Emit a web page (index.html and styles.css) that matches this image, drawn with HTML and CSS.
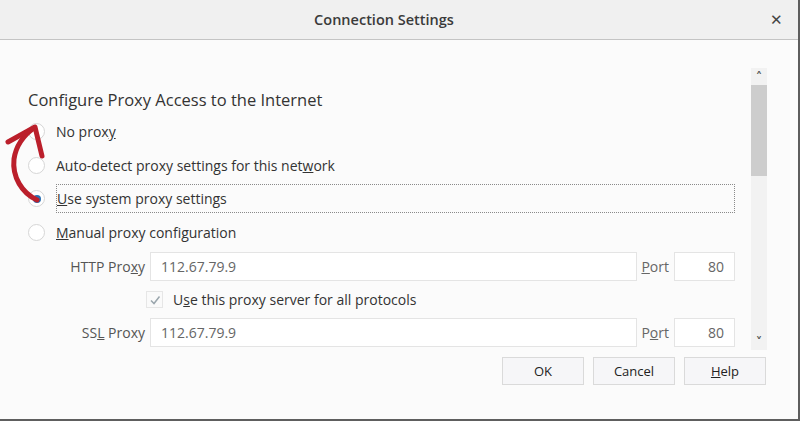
FILE: index.html
```html
<!DOCTYPE html>
<html>
<head>
<meta charset="utf-8">
<link rel="stylesheet" href="styles.css">
</head>
<body>
<div class="dialog">
  <div class="titlebar">
    <span class="title">Connection Settings</span>
    <span class="close">✕</span>
  </div>
  <div class="main">
    <div class="pane">
      <h1 class="heading">Configure Proxy Access to the Internet</h1>
      <div class="radio-row first"><span class="radio"></span><span class="label">No prox<u>y</u></span></div>
      <div class="radio-row"><span class="radio"></span><span class="label">Auto-detect proxy settings for this net<u>w</u>ork</span></div>
      <div class="radio-row focus"><span class="radio checked"></span><span class="label"><u>U</u>se system proxy settings</span></div>
      <div class="radio-row"><span class="radio"></span><span class="label"><u>M</u>anual proxy configuration</span></div>
      <div class="field-row">
        <span class="flabel">HTTP Pro<u>x</u>y</span>
        <span class="input">112.67.79.9</span>
        <span class="plabel"><u>P</u>ort</span>
        <span class="input port">80</span>
      </div>
      <div class="check-row">
        <span class="checkbox"><svg width="12" height="12" viewBox="0 0 12 12"><path d="M2 6.5 L5 9.5 L10.5 2.5" fill="none" stroke="#9aa6ad" stroke-width="1.5"/></svg></span>
        <span class="label">U<u>s</u>e this proxy server for all protocols</span>
      </div>
      <div class="field-row">
        <span class="flabel">SS<u>L</u> Proxy</span>
        <span class="input">112.67.79.9</span>
        <span class="plabel">P<u>o</u>rt</span>
        <span class="input port">80</span>
      </div>
    </div>
    <div class="scrollbar">
      <span class="arrow">&#x2C4;</span>
      <span class="thumb"></span>
      <span class="track"></span>
      <span class="arrow">&#x2C5;</span>
    </div>
  </div>
  <div class="buttons">
    <button class="btn">OK</button>
    <button class="btn">Cancel</button>
    <button class="btn"><u>H</u>elp</button>
  </div>
  <svg class="annotation" width="60" height="100" viewBox="0 115 60 100">
    <path d="M37 200 C 22 193, 12 177, 14 159 C 16 146, 24 135, 34 128" fill="none" stroke="#bb1f2b" stroke-width="5" stroke-linecap="round"/>
    <path d="M8 142 L35 127 L42 156" fill="none" stroke="#bb1f2b" stroke-width="5" stroke-linecap="round" stroke-linejoin="round"/>
  </svg>
</div>
</body>
</html>
```
FILE: styles.css
```css
html, body {
  margin: 0;
  padding: 0;
}
body {
  font-family: "Open Sans", "Noto Sans", sans-serif;
  color: #333;
  background: #fbfbfb;
}
.dialog {
  position: relative;
  width: 800px;
  height: 421px;
  box-sizing: border-box;
  border-right: 2px solid #5e5e5e;
  border-bottom: 2px solid #5e5e5e;
  background: #fbfbfb;
  overflow: hidden;
}
.titlebar {
  height: 40px;
  box-sizing: border-box;
  background: #f0f0f0;
  border-bottom: 1px solid #c4c4c4;
  display: flex;
  align-items: center;
  justify-content: center;
  position: relative;
}
.title {
  font-size: 14.5px;
  font-weight: 600;
  color: #3a3a3a;
  margin-left: -30px;
}
.close {
  position: absolute;
  right: 15px;
  top: 9px;
  font-size: 15px;
  color: #444;
}
.main {
  display: flex;
  padding-top: 28px;
  height: 282px;
}
.pane {
  flex: 1;
  padding-left: 28px;
  padding-right: 16px;
}
.heading {
  margin: 22px 0 0 0;
  font-size: 16.5px;
  font-weight: 500;
  line-height: 20px;
  color: #333;
}
.radio-row {
  display: flex;
  align-items: center;
  height: 29px;
  margin-top: 4.5px;
  box-sizing: border-box;
}
.radio-row.first {
  margin-top: 7px;
}
.radio {
  width: 17px;
  height: 17px;
  border-radius: 50%;
  border: 1px solid #d6d6d6;
  background: #fff;
  box-sizing: border-box;
  margin-right: 11px;
  display: flex;
  align-items: center;
  justify-content: center;
  flex: none;
}
.radio.checked::after {
  content: "";
  width: 8px;
  height: 8px;
  border-radius: 50%;
  background: #2a6fb1;
}
.label {
  font-size: 14px;
  color: #333;
  height: 100%;
  display: flex;
  align-items: center;
}
.focus .label {
  flex: 1;
  border: 1px dotted #8a8a8a;
  box-sizing: border-box;
}
.field-row {
  display: flex;
  align-items: center;
  height: 29px;
  margin-top: 5px;
  padding-left: 38px;
}
.flabel {
  width: 79px;
  text-align: right;
  font-size: 14px;
  color: #555;
  margin-right: 5px;
}
.input {
  flex: 1;
  height: 29px;
  box-sizing: border-box;
  border: 1px solid #e4e4e4;
  background: #fff;
  font-size: 14px;
  color: #666;
  padding-left: 10px;
  display: flex;
  align-items: center;
}
.input.port {
  flex: none;
  width: 61px;
  justify-content: flex-end;
  padding-right: 10px;
  padding-left: 0;
}
.plabel {
  font-size: 14px;
  color: #666;
  margin: 0 5px 0 4px;
}
.check-row {
  display: flex;
  align-items: center;
  height: 26px;
  margin-top: 6px;
  padding-left: 118px;
}
.checkbox {
  width: 17px;
  height: 17px;
  box-sizing: border-box;
  border: 1px solid #e6e6e6;
  background: #fafafa;
  display: flex;
  align-items: center;
  justify-content: center;
  margin-right: 10px;
}
.scrollbar {
  width: 16px;
  margin-right: 31px;
  background: #f2f2f2;
  display: flex;
  flex-direction: column;
  align-items: center;
}
.arrow {
  font-size: 13px;
  line-height: 17px;
  height: 17px;
  color: #555;
  font-family: "DejaVu Sans", sans-serif;
  font-weight: bold;
}
.thumb {
  width: 16px;
  height: 91px;
  background: #cdcdcd;
}
.track {
  flex: 1;
}
.buttons {
  display: flex;
  justify-content: flex-end;
  gap: 9px;
  padding-right: 32px;
  margin-top: 7px;
}
.btn {
  width: 82px;
  height: 28px;
  border: 1px solid #dadada;
  background: #f6f6f8;
  font-family: "Open Sans", "Noto Sans", sans-serif;
  font-size: 13px;
  color: #222;
  padding: 0;
}
.annotation {
  position: absolute;
  left: 0;
  top: 115px;
}
```
